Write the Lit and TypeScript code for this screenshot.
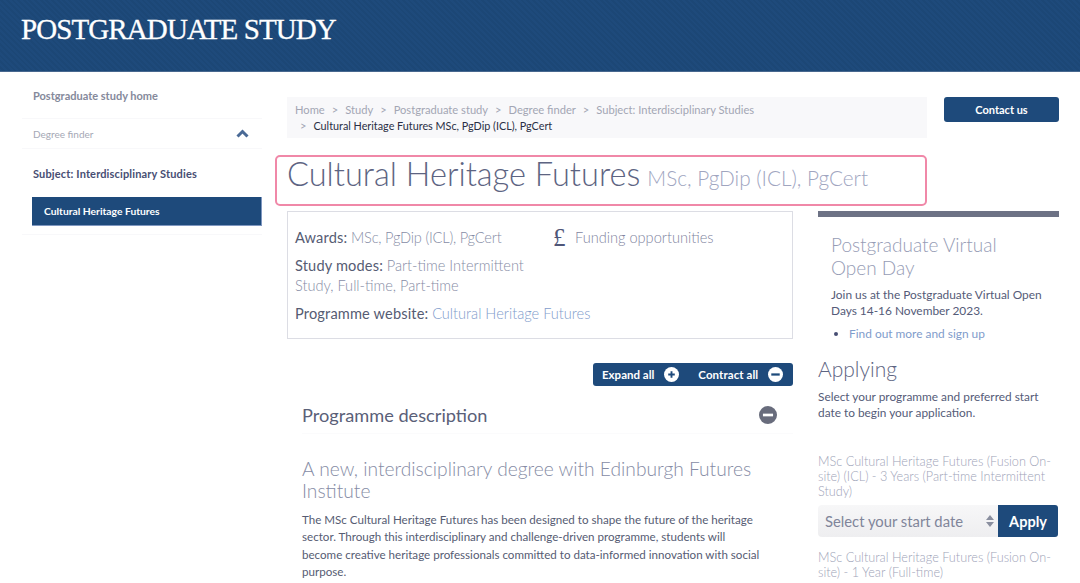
import { LitElement, html, css } from "lit";
import { customElement } from "lit/decorators.js";

@customElement("app-root")
export class AppRoot extends LitElement {
  static styles = css`
    :host { display: block; width: 1080px; height: 583px; overflow: hidden; background: #fff; font-family: Lato, "Open Sans", sans-serif; color: #474e68; }
    * { box-sizing: border-box; }
    a { text-decoration: none; }
    .banner { height: 72px; background: repeating-linear-gradient(45deg, #1e4a7b 0 2px, #1c4776 2px 4px); border-bottom: 1px solid #47688f; padding: 11px 0 0 21px; }
    .banner h1 { margin: 0; font: 400 29px/36px "Liberation Serif", serif; color: #fff; letter-spacing: -0.9px; -webkit-text-stroke: 0.3px #fff; }
    .page { display: flex; }
    .side { width: 240px; margin-left: 22px; flex: none; font-size: 11px; }
    .nav-home { height: 47px; padding: 17px 0 0 11px; border-bottom: 1px solid #f8f8fa; color: #85899b; font-weight: 700; line-height: 14px; }
    .nav-df { height: 30px; display: flex; justify-content: space-between; align-items: center; padding: 0 13px 0 11px; color: #a5a8b5; font-size: 10px; border-bottom: 1px solid #f8f8fa; }
    .nav-sub { height: 48px; display: flex; align-items: center; padding-left: 11px; color: #474e73; font-weight: 700; letter-spacing: 0.15px; }
    .nav-act { height: 29px; margin-left: 10px; display: flex; align-items: center; padding-left: 12px; background: #1e4a7b; color: #fff; font-weight: 700; font-size: 10.3px; border-bottom: 1px solid #7f97c0; border-right: 1px solid #7f97c0; }
    .nav-rule { height: 9px; border-bottom: 1px solid #f8f8fa; }
    .content { width: 772px; margin: 25px 0 0 25px; flex: none; }
    .top { display: flex; gap: 17px; align-items: flex-start; }
    .crumbs { width: 640px; height: 41px; background: #f8f8fa; padding: 5px 8px 0; font-size: 11.15px; line-height: 16px; color: #a3a6b4; }
    .crumbs i { font-style: normal; margin: 0 7px; }
    .crumbs i.first { margin-left: 5px; }
    .crumbs b { font-weight: 400; font-size: 10.8px; color: #2a2f45; }
    .contact { width: 115px; height: 25px; padding-bottom: 1px; background: #1e4a7b; border-radius: 3px; color: #fff; font-weight: 700; font-size: 11px; display: flex; align-items: center; justify-content: center; }
    .title { margin: 17px 0 5px -12px; width: 652px; height: 51px; border: 2px solid #f088a8; border-radius: 5px; padding-left: 10px; display: flex; align-items: baseline; gap: 7px; color: #5d6482; font-weight: 300; line-height: 33px; }
    .title span { font-size: 32.6px; }
    .title small { font-size: 20.75px; color: #a0a5bf; }
    .cols { display: flex; gap: 25px; }
    .left { width: 506px; flex: none; }
    .right { width: 241px; flex: none; }
    .info { height: 128px; border: 1px solid #dcdde4; padding: 16px 7px 0; display: grid; grid-template-columns: 248px 1fr; align-content: start; font-size: 14.6px; line-height: 19.6px; color: #565c73; }
    .info p { margin: 0 0 8.4px; }
    .wide { grid-column: 1 / span 2; }
    .lab { letter-spacing: 0.15px; }
    .light { color: #868ca5; font-weight: 300; }
    .tight { letter-spacing: -0.2px; }
    .link { color: #7f9ccb; font-weight: 300; }
    .fund { display: flex; align-items: flex-start; gap: 8px; color: #7f85a0; font-weight: 300; margin-left: 10px; }
    .pound { font: 400 25px/20px "Liberation Serif", serif; color: #4f5678; width: 14px; }
    .tools { display: flex; justify-content: flex-end; margin-top: 24px; }
    .bar-tools { width: 200px; height: 23px; background: #1e4a7b; border-radius: 3px; display: flex; align-items: center; color: #fff; font-weight: 700; font-size: 11.5px; padding-left: 9px; }
    .bar-tools svg { margin-left: 10px; flex: none; }
    .bar-tools .second { margin-left: 19px; letter-spacing: 0.08px; }
    .sect { display: flex; justify-content: space-between; align-items: center; height: 38px; margin: 10px 0 0 15px; padding-right: 16px; font-size: 18.2px; color: #5a6078; border-bottom: 1px solid #fbfbfc; }
    .lead { margin: 24px 0 9px 15px; font-size: 19.2px; line-height: 22px; font-weight: 300; color: #868ca5; }
    .body { margin: 0 28px 0 15px; font-size: 11.6px; line-height: 17.4px; color: #565c73; }
    .bar { height: 6px; background: #6d7285; }
    .open { padding: 0 13px; }
    .open h3 { margin: 16px 0 8px; font-size: 19px; line-height: 23px; font-weight: 300; color: #969cb5; }
    .open p { margin: 0 0 7px; font-size: 11.9px; line-height: 16px; color: #555b78; }
    .open ul { margin: 0; padding-left: 18px; font-size: 11.9px; line-height: 16px; color: #7f9ccb; }
    .open li::marker { color: #474e73; }
    h2 { margin: 14px 0 7px; font-size: 21px; line-height: 26px; font-weight: 300; color: #5d6482; }
    .r { font-size: 11.85px; line-height: 16px; color: #555b78; margin: 0; }
    .prog { font-size: 12.7px; line-height: 14.8px; color: #a0a4b8; font-weight: 300; margin: 0; }
    .gap { height: 33px; }
    .apply { display: flex; height: 32px; margin: 7px 1px 13px 0; }
    .sel { flex: 1; background: linear-gradient(#f7f7f8, #eeeef0); border-radius: 4px 0 0 4px; display: flex; align-items: center; justify-content: space-between; padding: 0 3px 0 7px; font-size: 14.8px; color: #80859a; }
    .btn { width: 60px; background: #1e4a7b; border-radius: 0 3px 3px 0; color: #fff; font-weight: 700; font-size: 14.5px; display: flex; align-items: center; justify-content: center; }
  `;

  render() {
    const plus = html`<svg width="15" height="15" viewBox="0 0 16 16"><circle cx="8" cy="8" r="8" fill="#fff"/><path d="M4.5 8h7M8 4.5v7" stroke="#1e4a7b" stroke-width="2"/></svg>`;
    const minus = (bg: string, fg: string, s: number) => html`<svg width=${s} height=${s} viewBox="0 0 16 16"><circle cx="8" cy="8" r="8" fill=${bg}/><path d="M3.5 8h9" stroke=${fg} stroke-width="2.4"/></svg>`;
    return html`
      <header class="banner"><h1>POSTGRADUATE STUDY</h1></header>
      <div class="page">
        <nav class="side">
          <div class="nav-home">Postgraduate study home</div>
          <div class="nav-df"><span>Degree finder</span>
            <svg width="13" height="9" viewBox="0 0 13 9"><path d="M1.5 7.5 6.5 2.5l5 5" fill="none" stroke="#4a6a96" stroke-width="3"/></svg></div>
          <div class="nav-sub">Subject: Interdisciplinary Studies</div>
          <div class="nav-act">Cultural Heritage Futures</div>
          <div class="nav-rule"></div>
        </nav>
        <main class="content">
          <div class="top">
            <div class="crumbs">Home<i>&gt;</i>Study<i>&gt;</i>Postgraduate study<i>&gt;</i>Degree finder<i>&gt;</i>Subject: Interdisciplinary Studies<br><i class="first">&gt;</i><b>Cultural Heritage Futures MSc, PgDip (ICL), PgCert</b></div>
            <a class="contact">Contact us</a>
          </div>
          <div class="title"><span>Cultural Heritage Futures</span><small>MSc, PgDip (ICL), PgCert</small></div>
          <div class="cols">
            <div class="left">
              <section class="info">
                <p><span class="lab">Awards:</span> <span class="light tight">MSc, PgDip (ICL), PgCert</span></p>
                <div class="fund"><span class="pound">£</span><span>Funding opportunities</span></div>
                <p><span class="lab">Study modes:</span> <span class="light">Part-time Intermittent Study, Full-time, Part-time</span></p>
                <span></span>
                <p class="wide"><span class="lab">Programme website:</span> <a class="link">Cultural Heritage Futures</a></p>
              </section>
              <div class="tools"><div class="bar-tools"><span>Expand all</span>${plus}<span class="second">Contract all</span>${minus("#fff", "#1e4a7b", 15)}</div></div>
              <div class="sect"><span>Programme description</span>${minus("#686c7c", "#fff", 18)}</div>
              <div class="lead">A new, interdisciplinary degree with Edinburgh Futures Institute</div>
              <p class="body">The MSc Cultural Heritage Futures has been designed to shape the future of the heritage sector. Through this interdisciplinary and challenge-driven programme, students will become creative heritage professionals committed to data-informed innovation with social purpose.</p>
            </div>
            <aside class="right">
              <div class="bar"></div>
              <div class="open">
                <h3>Postgraduate Virtual Open Day</h3>
                <p>Join us at the Postgraduate Virtual Open Days 14-16 November 2023.</p>
                <ul><li>Find out more and sign up</li></ul>
              </div>
              <h2>Applying</h2>
              <p class="r">Select your programme and preferred start date to begin your application.</p>
              <div class="gap"></div>
              <p class="prog">MSc Cultural Heritage Futures (Fusion On-site) (ICL) - 3 Years (Part-time Intermittent Study)</p>
              <div class="apply">
                <div class="sel"><span>Select your start date</span><svg width="10" height="14" viewBox="0 0 10 14"><path d="M5 1 9 6H1zM5 13 1 8h8z" fill="#8a8f9f"/></svg></div>
                <a class="btn">Apply</a>
              </div>
              <p class="prog">MSc Cultural Heritage Futures (Fusion On-site) - 1 Year (Full-time)</p>
            </aside>
          </div>
        </main>
      </div>`;
  }
}
